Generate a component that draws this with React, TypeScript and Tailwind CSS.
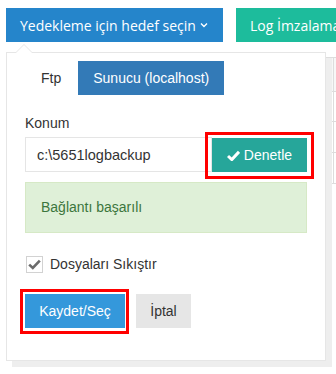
import { useState } from "react";

const rows = ["h-[34px] bg-[#f7f7f7]", "h-[30px]", "h-[31px]", "h-[31px]"];

function CheckIcon() {
  return (
    <svg width="13" height="11" viewBox="0 0 13 11" className="shrink-0">
      <path d="M1 6 L4.8 9.6 L12 1.8" fill="none" stroke="#fff" strokeWidth="3" strokeLinejoin="miter" />
    </svg>
  );
}

export default function App() {
  const [compress, setCompress] = useState(true);
  const [path, setPath] = useState("c:\\5651logbackup");

  return (
    <div className="relative w-[336px] h-[374px] overflow-hidden bg-white text-[14px] text-[#333] font-['Liberation_Sans',Arial,sans-serif]">
      {/* top bar */}
      <div className="flex gap-[13px] pl-[6px] pt-[8px] whitespace-nowrap font-['Open_Sans',sans-serif] text-[14px] text-white">
        <button className="flex h-[34px] w-[217px] shrink-0 items-center gap-[4px] bg-[#2585cb] pl-[14px]">
          Yedekleme için hedef seçin
          <svg width="8" height="6" viewBox="0 0 8 6">
            <path d="M1 1.5 L4 4.5 L7 1.5" fill="none" stroke="#fff" strokeWidth="1.4" />
          </svg>
        </button>
        <button className="flex h-[34px] shrink-0 items-center bg-[#1dbc9c] pl-[14px] pr-[10px]">Log İmzalama</button>
      </div>

      {/* table behind the dropdown */}
      <div className="ml-[6px] mt-[15px] w-[340px] border-b border-[#dddddd]">
        {rows.map((r, i) => (
          <div key={i} className={`flex border-t border-[#dddddd] ${r}`}>
            <div className="w-[328px] border-r border-[#dddddd]" />
            <div className="flex-1" />
          </div>
        ))}
      </div>

      {/* dropdown panel */}
      <div className="absolute left-[6px] top-[52px] w-[320px] border border-[#e6e6e6] bg-white px-[18px] pt-[8px] pb-[32px] shadow-[6px_6px_0_#eeeeee]">
        <span className="absolute -top-[9px] left-[8px] h-0 w-0 border-x-[9px] border-b-[9px] border-x-transparent border-b-[#e6e6e6]" />
        <span className="absolute -top-[8px] left-[9px] h-0 w-0 border-x-[8px] border-b-[8px] border-x-transparent border-b-white" />

        <div className="ml-[1px] flex leading-[20px]">
          <div className="px-[15px] py-[7px]">Ftp</div>
          <div className="ml-[2px] bg-[#337ab7] px-[15px] py-[7px] text-white">Sunucu (localhost)</div>
        </div>

        <div className="mt-[18px] mb-[4px] leading-[20px]">Konum</div>
        <div className="flex items-end">
          <input
            value={path}
            onChange={e => setPath(e.target.value)}
            className="h-[35px] w-[187px] border border-[#e5e5e5] pl-[11px] text-[14.5px] text-[#333] outline-none"
          />
          <button className="relative flex h-[34px] w-[95px] items-center justify-center gap-[4px] bg-[#26a69a] text-white">
            <CheckIcon />
            Denetle
            <span className="pointer-events-none absolute -left-[7px] -right-[7px] -top-[6px] -bottom-[7px] border-[3px] border-[#ff0000]" />
          </button>
        </div>

        <div className="mt-[10px] flex h-[51px] items-center border border-[#d6e9c6] bg-[#dff0d8] pl-[15px] text-[#3c763d]">
          Bağlantı başarılı
        </div>

        <label className="mt-[23px] ml-[1px] flex items-center gap-[7px] leading-[17px]">
          <span
            onClick={() => setCompress(!compress)}
            className="flex h-[17px] w-[17px] items-center justify-center border border-[#d2d2d2] bg-white"
          >
            {compress && (
              <svg width="13" height="11" viewBox="0 0 13 11">
                <path d="M1.2 5.6 L4.8 9 L11.8 1.6" fill="none" stroke="#6b6b6b" strokeWidth="2.6" />
              </svg>
            )}
          </span>
          Dosyaları Sıkıştır
        </label>

        <div className="mt-[21px] flex gap-[11px]">
          <button className="relative h-[34px] w-[100px] bg-[#3498db] text-white">
            Kaydet/Seç
            <span className="pointer-events-none absolute -left-[5px] -right-[4px] -top-[5px] -bottom-[6px] border-[3px] border-[#ff0000]" />
          </button>
          <button className="h-[34px] w-[55px] bg-[#e6e6e6] text-[#333]">İptal</button>
        </div>
      </div>
    </div>
  );
}
